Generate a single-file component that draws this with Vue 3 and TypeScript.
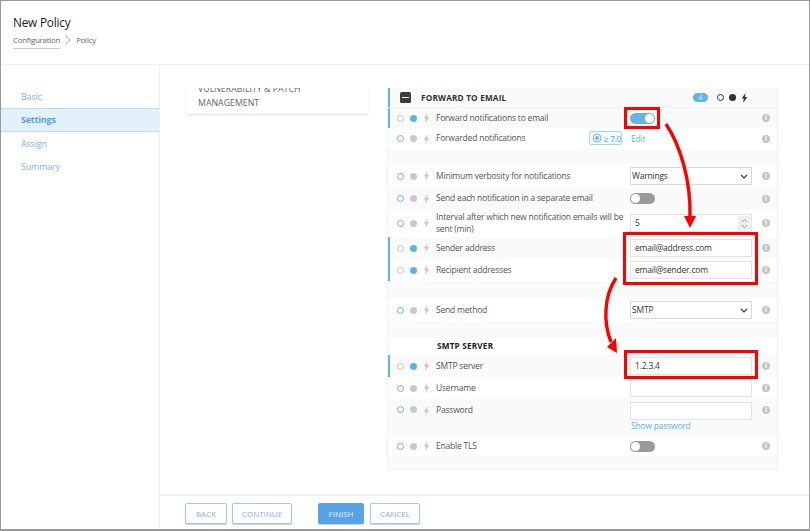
<script setup lang="ts">
interface Row {
  h: number
  label?: string
  type?: string
  value?: string
  on?: boolean
  bar?: boolean
  alt?: boolean
  heading?: string
  badge?: boolean
  tall?: boolean
}
const rows: Row[] = [
  { h: 20, label: 'Forward notifications to email', type: 'toggle', on: true, bar: true, alt: true },
  { h: 21, label: 'Forwarded notifications', type: 'edit', badge: true },
  { h: 15, alt: true },
  { h: 24, label: 'Minimum verbosity for notifications', type: 'select', value: 'Warnings' },
  { h: 21, label: 'Send each notification in a separate email', type: 'toggle', alt: true },
  { h: 28, label: 'Interval after which new notification emails will be sent (min)', type: 'number', value: '5' },
  { h: 22, label: 'Sender address', type: 'input', value: 'email@address.com', on: true, bar: true, alt: true },
  { h: 22, label: 'Recipient addresses', type: 'input', value: 'email@sender.com', on: true, bar: true },
  { h: 18, alt: true },
  { h: 22, label: 'Send method', type: 'select', value: 'SMTP' },
  { h: 17, alt: true },
  { h: 17, heading: 'SMTP SERVER' },
  { h: 22, label: 'SMTP server', type: 'input', value: '1.2.3.4', on: true, bar: true, alt: true },
  { h: 22, label: 'Username', type: 'input', value: '' },
  { h: 37, label: 'Password', type: 'password', value: '', alt: true, tall: true },
  { h: 20, label: 'Enable TLS', type: 'toggle' },
  { h: 15, alt: true },
]
const nav = ['Basic', 'Settings', 'Assign', 'Summary']
</script>

<template>
  <div class="window">
    <header class="top">
      <h1>New Policy</h1>
      <div class="crumbs">
        <span class="crumb-link">Configuration</span>
        <svg width="8" height="10" viewBox="0 0 8 10"><path d="M1.5 .8 6 5 1.5 9.2" fill="none" stroke="#888" stroke-width=".8" /></svg>
        <span>Policy</span>
      </div>
    </header>
    <div class="body">
      <nav class="side">
        <a v-for="n in nav" :key="n" :class="{ active: n === 'Settings' }">{{ n }}</a>
      </nav>
      <div class="main">
        <div class="scroll">
          <div class="card"><p>VULNERABILITY &amp; PATCH MANAGEMENT</p></div>
          <section class="panel">
            <div class="panel-head">
              <span class="minus"><i></i></span>
              <strong>FORWARD TO EMAIL</strong>
              <span class="legend">
                <span class="count">4</span>
                <span class="ring dark"></span>
                <span class="dot dark"></span>
                <svg width="7" height="10" viewBox="0 0 7 10"><path d="M4.6 0 .6 5.6h2.3L2 10l4.4-6H4z" fill="#333" /></svg>
              </span>
            </div>
            <div
              v-for="(r, i) in rows"
              :key="i"
              class="row"
              :class="{ alt: r.alt, bar: r.bar, tall: r.tall }"
              :style="{ height: r.h + 'px' }"
            >
              <template v-if="r.heading">
                <span class="heading">{{ r.heading }}</span>
              </template>
              <template v-else-if="r.label">
                <span class="ring" :class="{ off: r.on }"></span>
                <span class="dot" :class="{ on: r.on }"></span>
                <svg class="bolt" width="7" height="10" viewBox="0 0 7 10"><path d="M4.6 0 .6 5.6h2.3L2 10l4.4-6H4z" fill="#c8c8c8" /></svg>
                <span class="label">{{ r.label }}</span>
                <span v-if="r.badge" class="ver">
                  <svg width="10" height="10" viewBox="0 0 10 10"><circle cx="5" cy="5" r="4" fill="none" stroke="#6db8e0" /><circle cx="5" cy="5" r="2" fill="#6db8e0" /></svg>
                  ≥ 7.0
                </span>
                <div class="ctrl">
                  <span v-if="r.type === 'toggle'" class="toggle" :class="{ on: r.on }"><i></i></span>
                  <a v-else-if="r.type === 'edit'" class="link">Edit</a>
                  <div v-else-if="r.type === 'select'" class="field select">
                    {{ r.value }}
                    <svg width="8" height="5" viewBox="0 0 8 5"><path d="M1 1l3 3 3-3" fill="none" stroke="#333" stroke-width="1.1" /></svg>
                  </div>
                  <div v-else-if="r.type === 'number'" class="field number">
                    <span>{{ r.value }}</span>
                    <span class="spin">
                      <svg width="7" height="11" viewBox="0 0 7 11"><path d="M1 4l2.5-2.5L6 4M1 7l2.5 2.5L6 7" fill="none" stroke="#888" stroke-width=".8" /></svg>
                    </span>
                  </div>
                  <template v-else-if="r.type === 'password'">
                    <div class="field"></div>
                    <a class="link show">Show password</a>
                  </template>
                  <div v-else class="field">{{ r.value }}</div>
                </div>
                <span class="info">i</span>
              </template>
            </div>
          </section>
        </div>
        <footer class="foot">
          <button class="btn">BACK</button>
          <button class="btn">CONTINUE</button>
          <button class="btn primary">FINISH</button>
          <button class="btn">CANCEL</button>
        </footer>
      </div>
    </div>

    <div class="mark m1"></div>
    <div class="mark m2"></div>
    <div class="mark m3"></div>
    <svg class="arrows" width="810" height="531" viewBox="0 0 810 531">
      <path d="M666 124C680 145 691 180 690 217" fill="none" stroke="#f00" stroke-width="3.4" />
      <path d="M684 216h12l-6 12z" fill="#f00" />
      <path d="M616 278C604 296 603 322 611 342" fill="none" stroke="#f00" stroke-width="3.4" />
      <path d="M607 347l9-9 1 15z" fill="#f00" />
    </svg>
  </div>
</template>

<style>
html, body { margin: 0; background: #fff; }
</style>

<style scoped>
.window {
  position: relative;
  box-sizing: border-box;
  width: 810px;
  height: 531px;
  display: flex;
  flex-direction: column;
  overflow: hidden;
  border: 1px solid #9a9a9a;
  border-bottom-width: 2px;
  background: #fff;
  font-family: "Open Sans", "Noto Sans", sans-serif;
  font-size: 8.5px;
  letter-spacing: -.2px;
  color: #555;
}
.top {
  box-sizing: border-box;
  height: 64px;
  flex: none;
  padding: 13px 0 0 12px;
  border-bottom: 1px solid #eee;
}
h1 {
  margin: 0;
  font-size: 11.8px;
  font-weight: 400;
  line-height: 16px;
  color: #222;
}
.crumbs {
  display: flex;
  align-items: flex-start;
  gap: 4px;
  margin-top: 5px;
  font-size: 7.8px;
  line-height: 11px;
  color: #666;
}
.crumb-link {
  padding-bottom: 2px;
  border-bottom: 1.5px solid #ccc;
}
.body { flex: 1; display: flex; min-height: 0; }
.side {
  box-sizing: border-box;
  width: 159px;
  flex: none;
  padding-top: 20px;
  border-right: 1px solid #eee;
  display: flex;
  flex-direction: column;
}
.side a {
  box-sizing: border-box;
  height: 23.4px;
  line-height: 23px;
  padding-left: 20px;
  font-size: 9px;
  color: #7fb4ea;
}
.side a.active {
  background: #e3f1fb;
  border-top: 1px solid #b9dcf5;
  border-bottom: 1px solid #b9dcf5;
  line-height: 21px;
  font-weight: 700;
  color: #5a9fe0;
}
.main { flex: 1; display: flex; flex-direction: column; min-width: 0; }
.scroll {
  flex: 1;
  min-height: 0;
  display: flex;
  align-items: flex-start;
  padding: 23px 0 0 26px;
  overflow: hidden;
}
.card {
  box-sizing: border-box;
  width: 182px;
  height: 26px;
  overflow: hidden;
  margin-right: 19px;
  padding: 0 12px;
  border-radius: 0 0 3px 3px;
  box-shadow: 0 1px 2px #ddd;
}
.card p {
  margin: -5px 0 0;
  font-size: 8.8px;
  letter-spacing: 0;
  line-height: 13.5px;
  color: #666;
}
.panel {
  box-sizing: border-box;
  width: 391px;
  flex: none;
  border-right: 1px solid #f0f0f0;
  border-left: 1px solid #f0f0f0;
}
.panel-head {
  position: relative;
  display: flex;
  align-items: center;
  height: 19px;
  padding-left: 12px;
  background: #fafafa;
  border-bottom: 1px solid #f2f2f2;
  box-shadow: inset 2px 0 0 #62b5e5;
}
.panel-head strong {
  margin-left: 10px;
  font-size: 8.2px;
  letter-spacing: .2px;
  color: #333;
}
.minus {
  width: 11px;
  height: 11px;
  background: #3c3c3c;
  border-radius: 1.5px;
  display: flex;
  align-items: center;
  justify-content: center;
}
.minus i { width: 7px; height: 1.5px; background: #eee; }
.legend {
  margin-left: auto;
  margin-right: 29px;
  display: flex;
  align-items: center;
  gap: 5px;
}
.count {
  width: 15px;
  height: 9px;
  margin-right: 4px;
  border-radius: 5px;
  background: #62b5e5;
  color: #d6eef9;
  font-size: 7px;
  line-height: 9px;
  text-align: center;
}
.row {
  position: relative;
  box-sizing: border-box;
  display: flex;
  align-items: center;
  padding-left: 9px;
}
.row.tall { align-items: flex-start; padding-top: 7px; }
.row.alt { background: #fafafa; }
.row.bar { box-shadow: inset 2px 0 0 #62b5e5; }
.ring {
  box-sizing: border-box;
  width: 7px;
  height: 7px;
  flex: none;
  border-radius: 50%;
  border: 1px solid #62b5e5;
}
.ring.off { border-color: #c4c4c4; }
.ring.dark { border: 1.2px solid #333; }
.dot {
  width: 7px;
  height: 7px;
  flex: none;
  border-radius: 50%;
  background: #c8c8c8;
  margin-left: 6px;
}
.dot.on { background: #5bb2e3; }
.dot.dark { background: #333; margin-left: 0; }
.bolt { margin-left: 6px; flex: none; }
.label {
  position: absolute;
  left: 48px;
  width: 194px;
  line-height: 12.5px;
  color: #555;
}
.tall .label { top: 5px; }
.heading {
  margin: 0 0 2px 40px;
  font-size: 8.2px;
  font-weight: 700;
  letter-spacing: .2px;
  color: #222;
}
.ver {
  position: absolute;
  left: 201px;
  top: 3px;
  box-sizing: border-box;
  height: 14px;
  width: 33px;
  display: flex;
  align-items: center;
  gap: 2px;
  padding-left: 2px;
  border: 1px solid #a5d6f0;
  border-radius: 2px;
  background: #f3f9fd;
  color: #6db8e0;
  font-size: 8px;
  font-weight: 600;
  white-space: nowrap;
}
.ctrl {
  position: absolute;
  left: 242px;
  width: 122px;
}
.tall .ctrl { top: 3px; }
.field {
  box-sizing: border-box;
  width: 122px;
  height: 18px;
  padding: 0 4px;
  border: 1px solid #e3e3e3;
  background: #fff;
  line-height: 16px;
  color: #333;
}
.select {
  display: flex;
  align-items: center;
  justify-content: space-between;
  border-color: #d8d8d8;
  padding: 0 3px 0 1px;
}
.number { display: flex; justify-content: space-between; padding-right: 1px; }
.spin {
  width: 12px;
  height: 14px;
  margin-top: 1px;
  background: #eee;
  display: flex;
  align-items: center;
  justify-content: center;
}
.link { color: #5bb2e3; margin-left: 1px; }
.show { display: block; line-height: 12px; margin-left: 1px; }
.toggle {
  box-sizing: border-box;
  display: block;
  width: 25px;
  height: 11px;
  border-radius: 6px;
  background: #9a9a9a;
  position: relative;
}
.toggle i {
  position: absolute;
  left: 1px;
  top: 1px;
  width: 9px;
  height: 9px;
  border-radius: 50%;
  background: #fff;
}
.toggle.on { background: #62b5e5; }
.toggle.on i { left: 15px; }
.info {
  position: absolute;
  left: 374px;
  width: 8px;
  height: 8px;
  border-radius: 50%;
  background: #c4c4c4;
  color: #fff;
  font-size: 6.5px;
  font-weight: 700;
  line-height: 8px;
  text-align: center;
}
.tall .info { top: 7px; }
.foot {
  box-sizing: border-box;
  height: 35px;
  flex: none;
  display: flex;
  align-items: flex-start;
  padding: 7px 0 0 25px;
  border-top: 2px solid #f0f0f0;
}
.btn {
  box-sizing: border-box;
  height: 21px;
  padding: 0;
  margin-right: 5px;
  border: 1px solid #a0c9f0;
  border-radius: 2px;
  background: #fff;
  box-shadow: 0 1px 1px #ccc;
  color: #7fb0e8;
  font: 8px "Open Sans", sans-serif;
}
.btn:nth-child(1) { width: 42px; }
.btn:nth-child(2) { width: 60px; margin-right: 26px; }
.btn:nth-child(3) { width: 46px; margin-right: 6px; }
.btn:nth-child(4) { width: 50px; }
.btn.primary { background: #5aa2e6; border-color: #5aa2e6; color: #e3f0fc; }
.mark { position: absolute; box-sizing: border-box; border: 3px solid #f00; }
.m1 { left: 623px; top: 106px; width: 36px; height: 22px; }
.m2 { left: 622px; top: 231px; width: 135px; height: 53px; }
.m3 { left: 623px; top: 349px; width: 134px; height: 29px; }
.arrows { position: absolute; left: -1px; top: -1px; pointer-events: none; }
</style>
